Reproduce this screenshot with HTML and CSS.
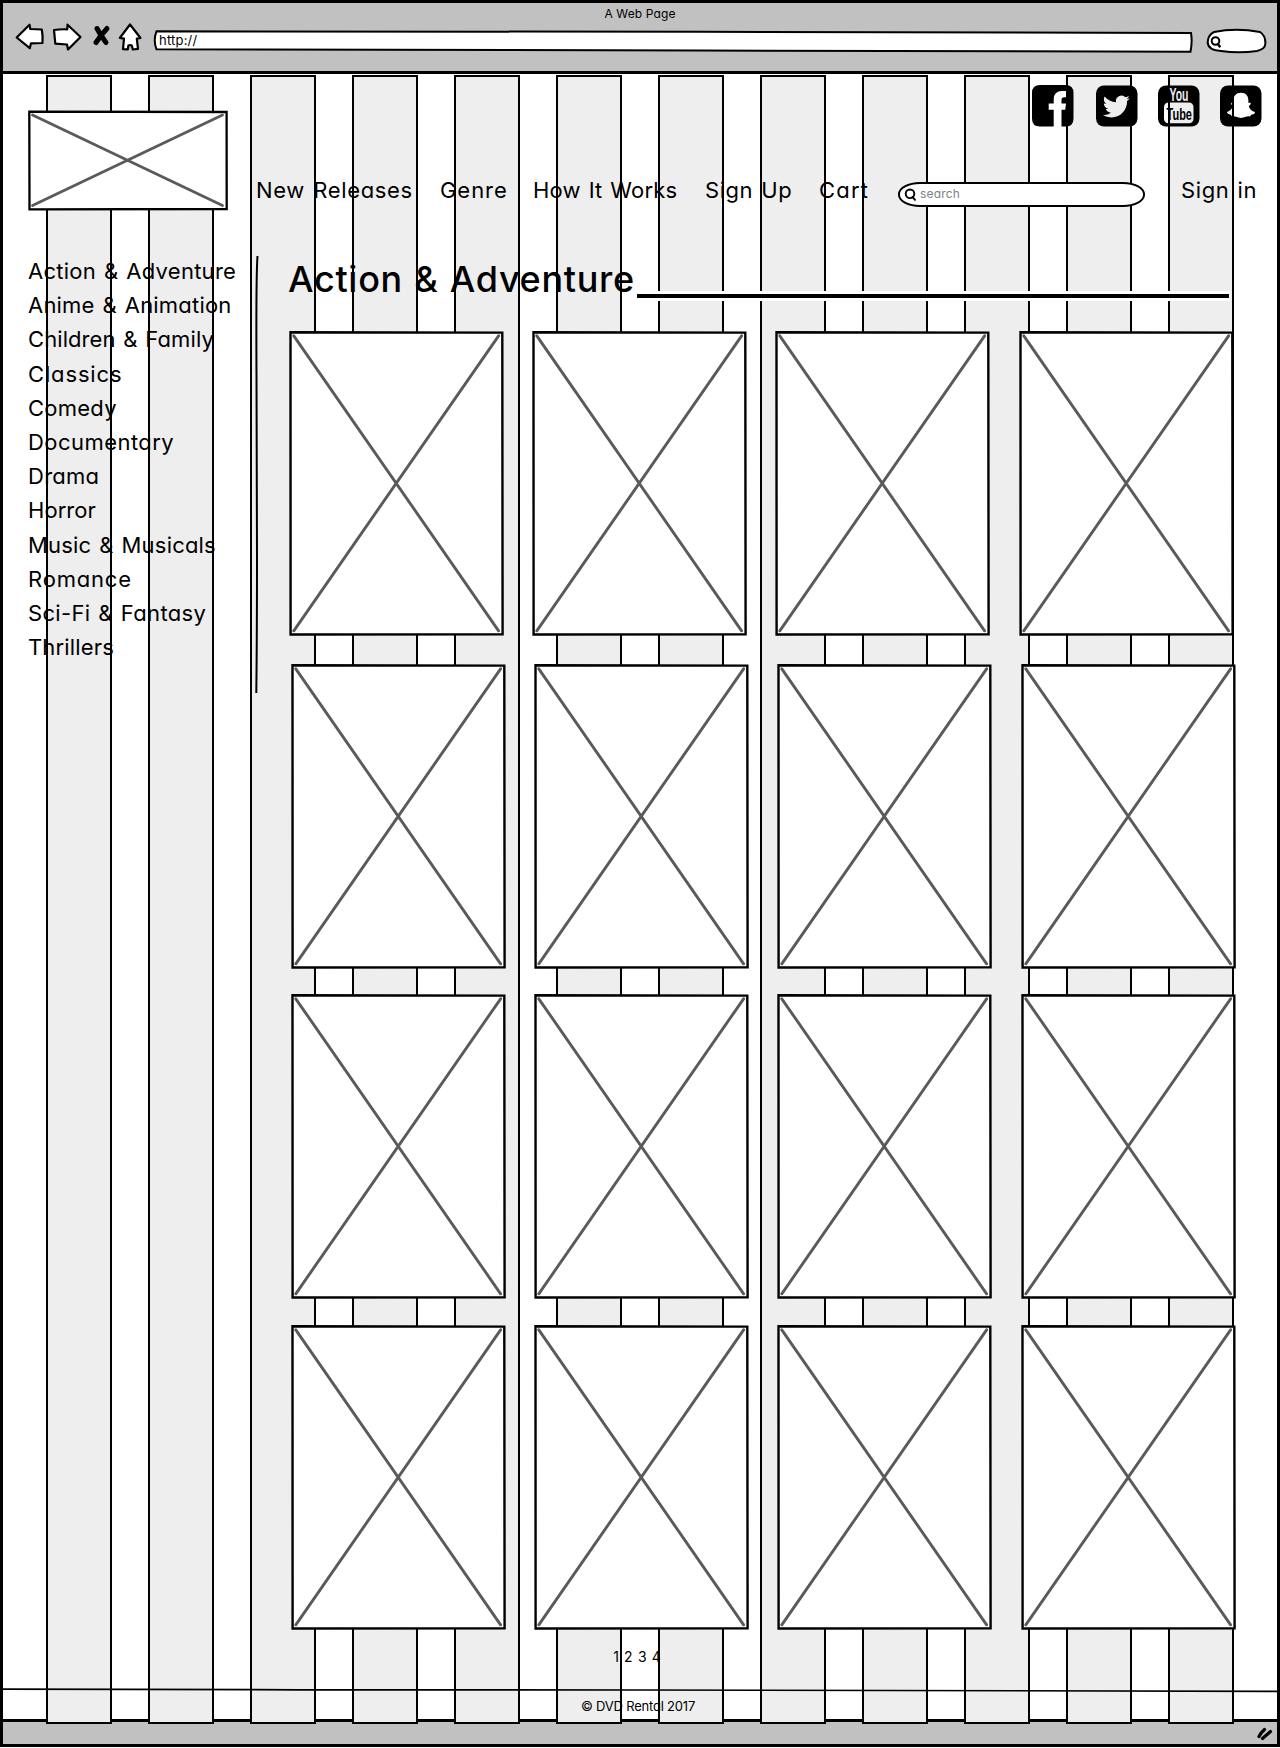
FILE: index.html
```
<!DOCTYPE html>
<html lang="en">
<head>
<meta charset="utf-8">
<title>A Web Page</title>
<link rel="stylesheet" href="styles.css">
</head>
<body>
<svg class="defs" width="0" height="0" aria-hidden="true">
  <symbol id="thumb" viewBox="0 0 215 305">
    <path d="M1.5 1.3 L213.3 1.6 L213.6 303.4 L1.6 303.5 Z" fill="#fff" stroke="#000" stroke-width="2.4"/>
    <path d="M4.8 4.8 L209.6 299.8 M209.6 4.8 L4.8 299.8" stroke="#5a5a5a" stroke-width="2.9" stroke-linecap="round"/>
  </symbol>
</svg>
<div class="window">
  <div class="chrome">
    <header class="bar">
      <div class="bar-title">A Web Page</div>
      <div class="bar-tools">
        <svg class="buttons" width="130" height="30" viewBox="15 22 130 30" fill="#fff" stroke="#000" stroke-width="2.2" stroke-linejoin="round" stroke-linecap="round">
          <path d="M16.7 37.5 L29.5 24.7 L30.3 29 L41.8 29.5 Q43 36 42.5 43 L31 43.3 L29.8 48.2 Z"/>
          <path d="M54 30 Q60 29 67.3 29.3 L67.5 24.7 L80.5 37 L68 49.5 L67 44.5 L55.3 43.6 Z"/>
          <path d="M97 28.5 Q101 36 106 42.5 M107 28.5 Q101 35 96 42.5" stroke-width="5"/>
          <path d="M130 24.5 L140.5 38 L136.8 38.6 L138 48.8 L132.8 49.5 L131.8 45.5 Q130 44.8 128.4 45.5 L127.8 49.3 L123 49.2 L124 38.6 L119.8 38 Z"/>
        </svg>
        <div class="address">
          <svg class="address-box" width="1040" height="24" viewBox="153 29 1040 24"><path d="M156.5 31.3 L700 31.8 L1191 33 Q1192.5 42 1190.5 51.7 L700 50.5 L156.5 49.3 Q153 40 156.5 31.3 Z" fill="#fff" stroke="#000" stroke-width="2"/></svg>
          <span class="address-text">http://</span>
        </div>
        <svg width="62" height="26" viewBox="1207 28 62 26" fill="none" stroke="#000" stroke-width="2">
          <path d="M1215 32 Q1237 27.5 1261 32 Q1267 36 1266.3 44 Q1266 49 1258 51 Q1240 53.5 1222 51 Q1208.5 50 1208.7 42 Q1209 35 1215 32 Z" fill="#fff"/>
          <circle cx="1216.5" cy="41" r="3.8"/><path d="M1218.5 43.5 L1221.3 47.3" stroke-width="2.4"/>
        </svg>
      </div>
    </header>
    <footer class="status"><svg width="18" height="14" viewBox="0 0 18 14" stroke="#000" stroke-width="3.2" stroke-linecap="round"><path d="M3 9.5 Q5 5.5 8.5 2.5 M6.5 11.5 L14.5 4.5"/></svg></footer>
  </div>

  <div class="stripes"><i></i><i></i><i></i><i></i><i></i><i></i><i></i><i></i><i></i><i></i><i></i><i></i></div>

  <div class="page">
    <div class="top">
      <svg class="logo" width="200" height="101" viewBox="0 0 200 101"><path d="M1.3 1.7 L198.6 2 L198.7 99 L1.5 99.3 Z" fill="#fff" stroke="#000" stroke-width="2.3"/><path d="M4.5 5 L194.5 95.5 M194.5 5 L4.5 95.5" stroke="#5a5a5a" stroke-width="2.8" stroke-linecap="round"/></svg>
      <div class="top-main">
        <div class="social">
          <svg class="fb" width="42" height="42" viewBox="0 0 42 42"><path fill-rule="evenodd" d="M8 0 H33.5 Q41.5 0 41.5 8 V33.5 Q41.5 41.5 33.5 41.5 H29.5 V24.7 H33.2 L34 18.5 H29.5 V15 Q29.5 12.3 32 12.3 H34 V6 H30 Q21.7 6 21.7 14.5 V18.5 H16.7 V24.7 H21.7 V41.5 H8 Q0 41.5 0 33.5 V8 Q0 0 8 0 Z"/></svg>
          <svg width="42" height="42" viewBox="0 0 42 42"><mask id="bird"><rect width="42" height="42" fill="#fff"/><path transform="translate(6.8 8) scale(1.125)" d="M23.953 4.57a10 10 0 01-2.825.775 4.958 4.958 0 002.163-2.723c-.951.555-2.005.959-3.127 1.184a4.92 4.92 0 00-8.384 4.482C7.69 8.095 4.067 6.13 1.64 3.162a4.822 4.822 0 00-.666 2.475c0 1.71.87 3.213 2.188 4.096a4.904 4.904 0 01-2.228-.616v.06a4.923 4.923 0 003.946 4.827 4.996 4.996 0 01-2.212.085 4.936 4.936 0 004.604 3.417 9.867 9.867 0 01-6.102 2.105c-.39 0-.779-.023-1.17-.067a13.995 13.995 0 007.557 2.209c9.053 0 13.998-7.496 13.998-13.985 0-.21 0-.42-.015-.63A9.935 9.935 0 0024 4.59z"/></mask><rect y=".5" width="41.5" height="41" rx="8" mask="url(#bird)"/></svg>
          <svg class="youtube" width="42" height="42" viewBox="0 0 42 42"><mask id="tube"><rect width="42" height="42" fill="#fff"/><rect x="6" y="17.5" width="29.5" height="20.8" rx="4.5"/></mask><rect y=".5" width="41.5" height="41" rx="8" mask="url(#tube)"/><text class="yt" x="11.5" y="16" font-size="17.5" textLength="19" lengthAdjust="spacingAndGlyphs" fill="#eee">You</text><text class="yt" x="8.5" y="34.5" font-size="17" textLength="25.5" lengthAdjust="spacingAndGlyphs">Tube</text></svg>
          <svg width="42" height="42" viewBox="0 0 42 42"><mask id="ghost"><rect width="42" height="42" fill="#fff"/><path d="M21 7.7 C16 7.7 13.5 11 13.5 15 L13.3 18 C11 17 10 19 13 21 C12 24 9 26.5 7 27 C7 29 10 29.5 11 30 L12 31.5 C15 30.5 17 32.5 21 33 C25 32.5 27 30.5 30 31.5 L31 30 C33 29.5 35 29 35 27 C32 26.5 29.5 24 28.7 21 C32 19 31 17 28.5 18 L28.3 15 C28.3 11 26 7.7 21 7.7 Z"/></mask><rect y=".5" width="41.5" height="41" rx="8" mask="url(#ghost)"/></svg>
        </div>
        <nav class="nav">
          <a class="t-new">New Releases</a><a class="t-genre">Genre</a><a class="t-how">How It Works</a><a class="t-up">Sign Up</a><a class="t-cart">Cart</a>
          <div class="search"><svg width="14" height="14" viewBox="0 0 14 14" fill="none" stroke="#000" stroke-width="1.9" stroke-linecap="round"><circle cx="6" cy="5.8" r="4.3"/><path d="M8.5 9 L11 11.8"/></svg><span>search</span></div>
          <a class="t-in">Sign in</a>
        </nav>
      </div>
    </div>

    <div class="body">
      <ul class="genres">
        <li class="g-action">Action &amp; Adventure</li>
        <li class="g-anime">Anime &amp; Animation</li>
        <li class="g-children">Children &amp; Family</li>
        <li class="g-classics">Classics</li>
        <li class="g-comedy">Comedy</li>
        <li class="g-documentary">Documentary</li>
        <li class="g-drama">Drama</li>
        <li class="g-horror">Horror</li>
        <li class="g-music">Music &amp; Musicals</li>
        <li class="g-romance">Romance</li>
        <li class="g-scifi">Sci-Fi &amp; Fantasy</li>
        <li class="g-thrillers">Thrillers</li>
      </ul>
      <svg class="divider" width="4" height="437" viewBox="0 0 4 437" fill="none" stroke="#000" stroke-width="2"><path d="M2.5 0 Q1 20 1.5 120 T2 300 T1.3 437"/></svg>
      <main class="catalog">
        <div class="heading"><h1>Action &amp; Adventure</h1><span class="rule"></span></div>
        <div class="grid">
          <div class="row first"><svg><use href="#thumb"/></svg><svg><use href="#thumb"/></svg><svg><use href="#thumb"/></svg><svg><use href="#thumb"/></svg></div>
          <div class="row second"><svg><use href="#thumb"/></svg><svg><use href="#thumb"/></svg><svg><use href="#thumb"/></svg><svg><use href="#thumb"/></svg></div>
          <div class="row"><svg><use href="#thumb"/></svg><svg><use href="#thumb"/></svg><svg><use href="#thumb"/></svg><svg><use href="#thumb"/></svg></div>
          <div class="row"><svg><use href="#thumb"/></svg><svg><use href="#thumb"/></svg><svg><use href="#thumb"/></svg><svg><use href="#thumb"/></svg></div>
        </div>
      </main>
    </div>

    <div class="pager">1 2 3 4</div>
    <svg class="footline" width="1280" height="5" viewBox="0 0 1280 5"><path d="M0 1.2 L300 1.8 L640 2 L1280 3.3" fill="none" stroke="#000" stroke-width="1.7"/></svg>
    <div class="copy">© DVD Rental 2017</div>
  </div>
</div>
</body>
</html>
```
FILE: styles.css
```
* { box-sizing: border-box; }
body {
  margin: 0;
  background: #fff;
  color: #000;
  font-family: Inter, "Liberation Sans", sans-serif;
  font-feature-settings: "cv11";
}
svg { display: block; flex: none; }
.defs { position: absolute; }

/* The chrome, the column guides and the page share one grid cell. */
.window { display: grid; width: 1280px; height: 1748px; overflow: hidden; }
.chrome, .stripes, .page { grid-area: 1 / 1; min-width: 0; }

.chrome {
  display: flex;
  flex-direction: column;
  justify-content: space-between;
  height: 1747px;
  border: 3px solid #000;
}
.bar { height: 71px; background: #c1c1c1; border-bottom: 3px solid #000; }
.bar-title { padding-top: 2px; font-size: 12px; line-height: 18px; letter-spacing: .12px; text-align: center; }
.bar-tools { display: flex; padding-left: 12px; margin-top: -1px; }
.address { display: grid; width: 1040px; margin: 7px 13px 0 8px; }
.address-box, .address-text { grid-area: 1 / 1; }
.address-text { padding-left: 6px; font-size: 13px; line-height: 23px; letter-spacing: .2px; }
.bar-tools > svg:last-child { margin-top: 6px; }
.status {
  display: flex;
  justify-content: flex-end;
  height: 25px;
  padding: 5px 3px;
  background: #c1c1c1;
  border-top: 3px solid #000;
}

.stripes { display: flex; gap: 36px; height: 1649px; margin: 75px 0 0 46px; }
.stripes i { width: 66px; flex: none; background: #eee; border: 2px solid #000; }

.page { padding-top: 74px; }
.top { display: flex; height: 182px; padding-left: 28px; }
.logo { margin-top: 36px; }
.top-main { width: 1052px; }
.social { display: flex; justify-content: flex-end; gap: 20px; padding: 11px 18px 0 0; }
.fb { margin-right: 2px; }
.youtube { overflow: visible; }
.yt { font-family: "Liberation Sans", sans-serif; font-weight: 700; }
.nav {
  display: grid;
  grid-template-columns: 184px 93px 172px 114px 79px 283px 80px;
  padding-left: 28px;
  margin-top: 49px;
  font-size: 22px;
  line-height: 28px;
  white-space: nowrap;
  word-spacing: 1.5px;
}
.t-new { letter-spacing: .65px; }
.t-genre { letter-spacing: .95px; }
.t-how { letter-spacing: .2px; }
.t-up { letter-spacing: .55px; }
.t-cart { letter-spacing: 1.2px; }
.t-in { letter-spacing: .6px; }
.search {
  display: flex;
  align-items: center;
  gap: 2px;
  width: 247px;
  height: 25px;
  margin-top: 6px;
  padding-left: 4px;
  background: #fff;
  border: 2px solid #000;
  border-radius: 22px / 12px;
  color: #808088;
  font-size: 12px;
  line-height: 20px;
  letter-spacing: .2px;
}
.search span { padding-bottom: 2px; }

.body { display: flex; height: 1373px; }
.genres {
  width: 227px;
  margin: -2px 0 0 28px;
  padding: 0;
  list-style: none;
  font-size: 22px;
  line-height: 34.2px;
  white-space: nowrap;
  word-spacing: 1.5px;
}
.g-action { letter-spacing: .26px; }
.g-anime { letter-spacing: .2px; }
.g-children { letter-spacing: .08px; }
.g-classics { letter-spacing: .85px; }
.g-comedy { letter-spacing: .25px; }
.g-documentary { letter-spacing: .45px; }
.g-drama { letter-spacing: .25px; }
.g-horror { letter-spacing: .05px; }
.g-music { letter-spacing: .2px; }
.g-romance { letter-spacing: .8px; }
.g-scifi { letter-spacing: .32px; }
.g-thrillers { letter-spacing: .15px; }

.catalog { margin-left: 30px; }
.heading { display: flex; height: 75px; }
h1 {
  width: 348px;
  margin: 1px 0 0 -1px;
  font-size: 36px;
  font-weight: 500;
  line-height: 44px;
  letter-spacing: .7px;
  word-spacing: 1px;
  white-space: nowrap;
}
.rule {
  width: 593px;
  height: 10px;
  margin: 35px 0 0 1px;
  background: #000;
  border: solid #fff;
  border-width: 3px 1px 3px 0;
}
.row { display: grid; grid-template-columns: repeat(4, 215px); column-gap: 28.2px; padding-left: 2px; margin-bottom: 26px; }
.row svg { width: 215px; height: 305px; }
.row.first { padding-left: 0; margin-bottom: 28px; }
.row.second { margin-bottom: 25px; }

.pager { width: 1274px; margin-top: 17px; font-size: 14px; line-height: 22px; word-spacing: 1.3px; text-align: center; }
.footline { margin-top: 20px; }
.copy { width: 1276px; padding-top: 3px; font-size: 13px; line-height: 20px; letter-spacing: -.2px; text-align: center; }
```
